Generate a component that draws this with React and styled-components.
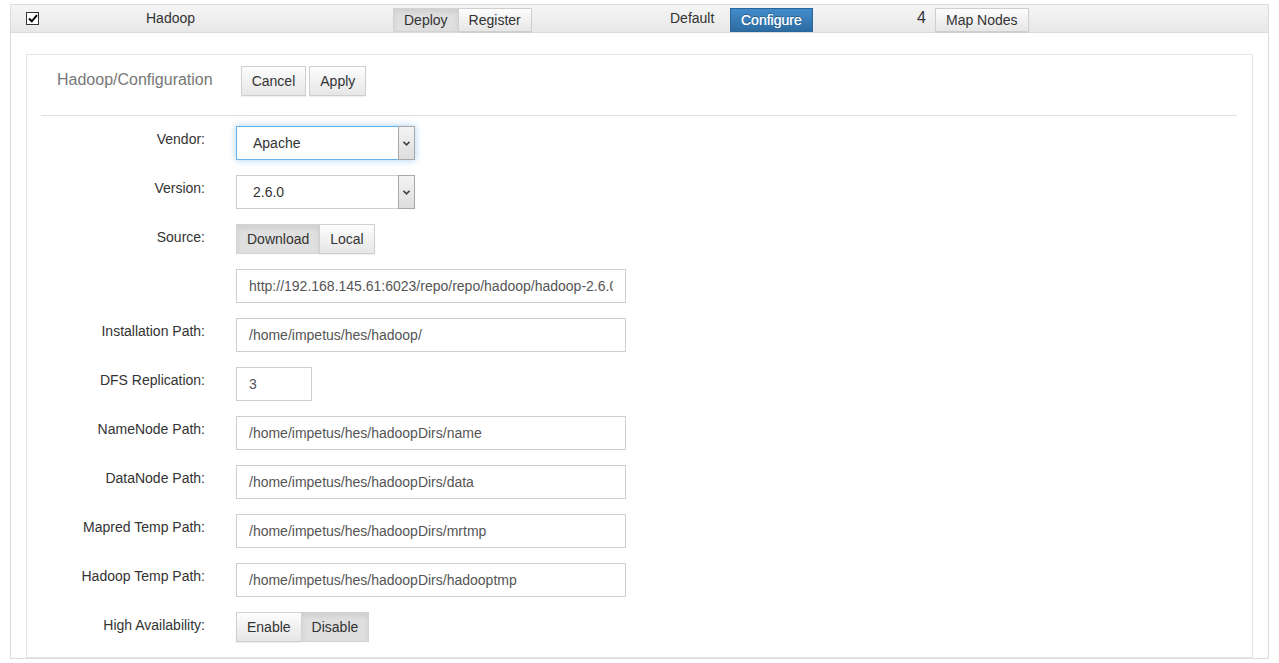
import React from "react";
import styled, { createGlobalStyle, css } from "styled-components";

const GlobalStyle = createGlobalStyle`
  html, body {
    margin: 0;
    padding: 0;
    background: #fff;
    font-family: "Liberation Sans", Arial, sans-serif;
    font-size: 14px;
    color: #333;
  }
  * { box-sizing: border-box; }
`;

const Page = styled.div`
  padding: 4px 10px 0;
`;

const Panel = styled.div`
  height: 655px;
  border: 1px solid #dcdcdc;
  overflow: hidden;
`;

const Heading = styled.div`
  display: grid;
  grid-template-columns: 120px 262px 277px 60px 187px 18px auto;
  align-items: center;
  height: 28px;
  padding-top: 2px;
  background: linear-gradient(#f5f5f5, #e8e8e8);
  border-bottom: 1px solid #dcdcdc;
`;

const Cell = styled.div`
  display: flex;
  align-items: center;
  padding-left: ${(props) => props.$pad || 0}px;
  padding-bottom: ${(props) => (props.$text ? 3 : 0)}px;
  font-size: ${(props) => props.$size || 14}px;
`;

const CheckBox = styled.span`
  display: inline-flex;
  align-items: center;
  justify-content: center;
  width: 13px;
  height: 13px;
  border: 1px solid #333;
  background: #fff;
  margin-top: -2px;
`;

const Body = styled.div`
  padding: 21px 15px 0;
`;

const Inner = styled.div`
  height: 604px;
  border: 1px solid #e6e6e6;
  padding: 11px 15px 11px 14px;
  overflow: hidden;
`;

const TitleRow = styled.div`
  display: flex;
  align-items: center;
  gap: 3px;
  height: 30px;
  padding-left: 16px;
`;

const Title = styled.span`
  font-size: 16px;
  color: #777;
  margin-right: 25px;
  margin-top: -3px;
`;

const Rule = styled.hr`
  margin: 19px 0 10px;
  border: 0;
  border-top: 1px solid #dedede;
`;

const Row = styled.div`
  display: flex;
  align-items: flex-start;
  margin-bottom: 15px;
`;

const Label = styled.label`
  width: 180px;
  padding: 3px 16px 0 0;
  text-align: right;
  line-height: 20px;
  flex-shrink: 0;
`;

const Control = styled.div`
  margin-left: 15px;
  display: flex;
`;

const buttonBase = css`
  font-family: "Liberation Sans", Arial, sans-serif;
  font-size: 14px;
  color: #333;
  line-height: 20px;
  padding: ${(props) => (props.$small ? "1px 10px" : "4px 10px")};
  border: 1px solid #cfcfcf;
  border-radius: 0;
  cursor: pointer;
  white-space: nowrap;
`;

const Button = styled.button`
  ${buttonBase}
  background: linear-gradient(#fdfdfd, #e6e6e6);
  box-shadow: 0 1px 1px rgba(0, 0, 0, 0.06);
  ${(props) =>
    props.$active &&
    css`
      background: #dfdfdf;
      border-color: #d4d4d4;
      box-shadow: inset 0 3px 5px rgba(0, 0, 0, 0.08);
    `}
`;

const PrimaryButton = styled.button`
  ${buttonBase}
  color: #fff;
  background: linear-gradient(#428bca, #2d6ca2);
  border-color: #2b669a;
  text-shadow: 0 -1px 0 rgba(0, 0, 0, 0.3), 0 0 0.4px #fff;
`;

const Group = styled.div`
  display: flex;
  & > button + button {
    margin-left: -1px;
  }
`;

const Input = styled.input`
  height: 34px;
  width: ${(props) => props.$width || 390}px;
  padding: 6px 12px;
  border: 1px solid #cfcfcf;
  border-radius: 0;
  font-family: "Liberation Sans", Arial, sans-serif;
  font-size: 14px;
  color: #555;
  outline: none;
`;

const SelectBox = styled.div`
  display: flex;
  width: 179px;
  height: 34px;
  border: 1px solid ${(props) => (props.$focus ? "#66afe9" : "#cccccc")};
  box-shadow: ${(props) =>
    props.$focus ? "0 0 7px rgba(102, 175, 233, 0.6)" : "none"};
  background: #fff;
`;

const SelectText = styled.div`
  flex: 1;
  padding-left: 16px;
  line-height: 32px;
  font-size: 14px;
  color: #333;
`;

const Arrow = styled.div`
  width: 17px;
  display: flex;
  align-items: center;
  justify-content: center;
  background: linear-gradient(#f3f3f3, #dedede);
  border: 1px solid #a8a8a8;
  margin: -1px -1px -1px 0;
`;

function Select({ value, focus }) {
  return (
    <SelectBox $focus={focus}>
      <SelectText>{value}</SelectText>
      <Arrow>
        <svg width="7" height="5" viewBox="0 0 7 5">
          <path d="M0.5 0.8 L3.5 3.8 L6.5 0.8" fill="none" stroke="#444" strokeWidth="1.6" />
        </svg>
      </Arrow>
    </SelectBox>
  );
}

const paths = [
  ["Installation Path:", "/home/impetus/hes/hadoop/", 390],
  ["DFS Replication:", "3", 76],
  ["NameNode Path:", "/home/impetus/hes/hadoopDirs/name", 390],
  ["DataNode Path:", "/home/impetus/hes/hadoopDirs/data", 390],
  ["Mapred Temp Path:", "/home/impetus/hes/hadoopDirs/mrtmp", 390],
  ["Hadoop Temp Path:", "/home/impetus/hes/hadoopDirs/hadooptmp", 390],
];

export default function App() {
  return (
    <>
      <GlobalStyle />
      <Page>
        <Panel>
          <Heading>
            <Cell $pad={15}>
              <CheckBox>
                <svg width="10" height="9" viewBox="0 0 10 9">
                  <path d="M1 4.5 L3.8 7.3 L9 1.2" fill="none" stroke="#000" strokeWidth="2" />
                </svg>
              </CheckBox>
            </Cell>
            <Cell $pad={15} $text>Hadoop</Cell>
            <Cell>
              <Group>
                <Button $small $active>Deploy</Button>
                <Button $small>Register</Button>
              </Group>
            </Cell>
            <Cell $text>Default</Cell>
            <Cell>
              <PrimaryButton $small>Configure</PrimaryButton>
            </Cell>
            <Cell $text $size={16}>4</Cell>
            <Cell>
              <Button $small>Map Nodes</Button>
            </Cell>
          </Heading>
          <Body>
            <Inner>
              <TitleRow>
                <Title>Hadoop/Configuration</Title>
                <Button>Cancel</Button>
                <Button>Apply</Button>
              </TitleRow>
              <Rule />
              <Row>
                <Label>Vendor:</Label>
                <Control>
                  <Select value="Apache" focus />
                </Control>
              </Row>
              <Row>
                <Label>Version:</Label>
                <Control>
                  <Select value="2.6.0" />
                </Control>
              </Row>
              <Row>
                <Label>Source:</Label>
                <Control>
                  <Group>
                    <Button $active>Download</Button>
                    <Button>Local</Button>
                  </Group>
                </Control>
              </Row>
              <Row>
                <Label></Label>
                <Control>
                  <Input
                    readOnly
                    value="http://192.168.145.61:6023/repo/repo/hadoop/hadoop-2.6.0.tar.gz"
                  />
                </Control>
              </Row>
              {paths.map(([label, value, width]) => (
                <Row key={label}>
                  <Label>{label}</Label>
                  <Control>
                    <Input readOnly value={value} $width={width} />
                  </Control>
                </Row>
              ))}
              <Row>
                <Label>High Availability:</Label>
                <Control>
                  <Group>
                    <Button>Enable</Button>
                    <Button $active>Disable</Button>
                  </Group>
                </Control>
              </Row>
            </Inner>
          </Body>
        </Panel>
      </Page>
    </>
  );
}
